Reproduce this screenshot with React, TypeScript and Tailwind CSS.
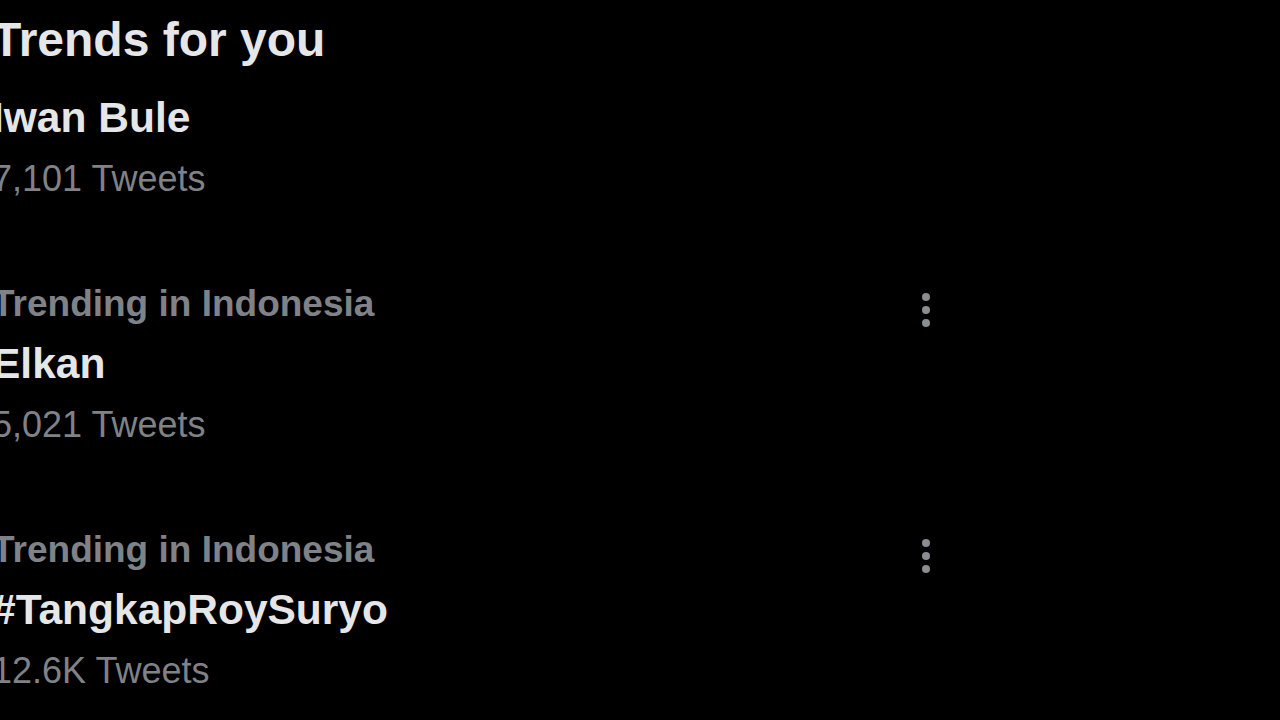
import React from 'react';

type Trend = {
  context?: string;
  name: string;
  tweets: string;
};

const trends: Trend[] = [
  { name: 'Iwan Bule', tweets: '7,101 Tweets' },
  { context: 'Trending in Indonesia', name: 'Elkan', tweets: '5,021 Tweets' },
  { context: 'Trending in Indonesia', name: '#TangkapRoySuryo', tweets: '12.6K Tweets' },
];

const MoreIcon = () => (
  <svg width="16" height="34" viewBox="0 0 16 34" className="text-[#8a8d91]">
    <circle cx="8" cy="4" r="4" fill="currentColor" />
    <circle cx="8" cy="17" r="4" fill="currentColor" />
    <circle cx="8" cy="30" r="4" fill="currentColor" />
  </svg>
);

const TrendRow: React.FC<{ trend: Trend }> = ({ trend }) => (
  <div className="flex w-[942px] items-start justify-between">
    <div className="flex flex-col">
      {trend.context && (
        <span className="text-[37px] font-bold leading-[60px] text-[#7f8286]">{trend.context}</span>
      )}
      <span className="text-[42.5px] font-bold leading-[60px] text-[#e4e6e7]">{trend.name}</span>
      <span className="text-[36px] leading-[61px] text-[#7f8286]">{trend.tweets}</span>
    </div>
    {trend.context && (
      <div className="mt-[19px]">
        <MoreIcon />
      </div>
    )}
  </div>
);

const App: React.FC = () => {
  return (
    <div className="h-[720px] w-[1280px] overflow-hidden bg-black" style={{ fontFamily: '"Liberation Sans", Arial, sans-serif' }}>
      <div className="-ml-2 flex flex-col pt-3">
        <h2 className="text-[48px] font-bold leading-[56px] text-[#e4e6e7]">Trends for you</h2>
        <div className="mt-5 flex flex-col gap-[65px]">
          {trends.map(trend => (
            <TrendRow key={trend.name} trend={trend} />
          ))}
        </div>
      </div>
    </div>
  );
};

export default App;
